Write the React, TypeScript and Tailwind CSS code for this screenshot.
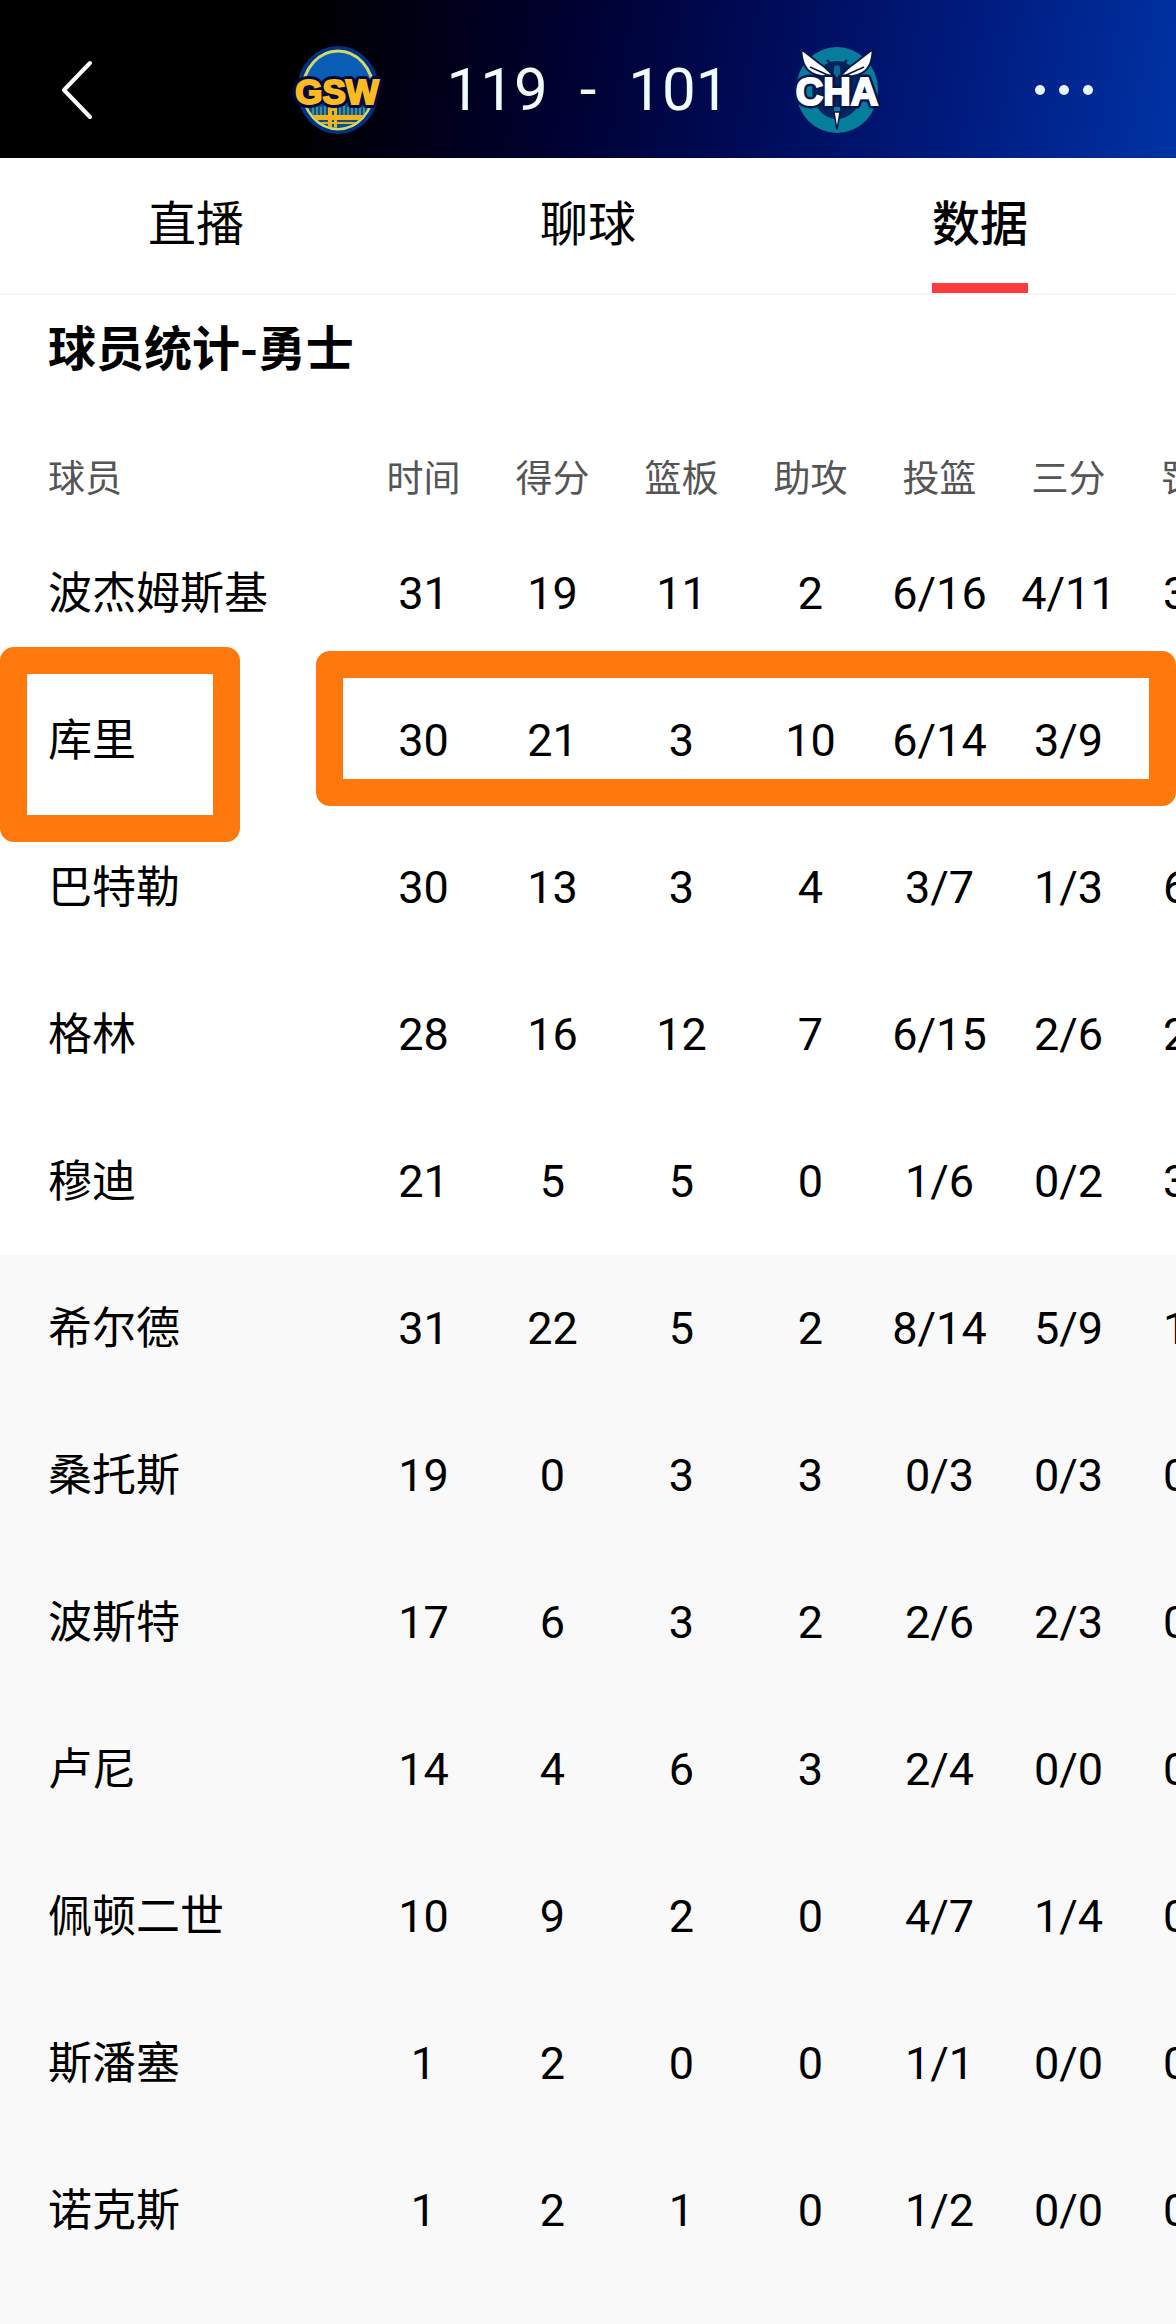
import React from 'react';

type Player = { name: string; stats: string[]; highlighted?: boolean };

const COLUMNS = ['时间', '得分', '篮板', '助攻', '投篮', '三分', '罚球'];

const STARTERS: Player[] = [
  { name: '波杰姆斯基', stats: ['31', '19', '11', '2', '6/16', '4/11', '3/3'] },
  { name: '库里', stats: ['30', '21', '3', '10', '6/14', '3/9', '6/6'], highlighted: true },
  { name: '巴特勒', stats: ['30', '13', '3', '4', '3/7', '1/3', '6/6'] },
  { name: '格林', stats: ['28', '16', '12', '7', '6/15', '2/6', '2/2'] },
  { name: '穆迪', stats: ['21', '5', '5', '0', '1/6', '0/2', '3/4'] },
];

const BENCH: Player[] = [
  { name: '希尔德', stats: ['31', '22', '5', '2', '8/14', '5/9', '1/1'] },
  { name: '桑托斯', stats: ['19', '0', '3', '3', '0/3', '0/3', '0/0'] },
  { name: '波斯特', stats: ['17', '6', '3', '2', '2/6', '2/3', '0/0'] },
  { name: '卢尼', stats: ['14', '4', '6', '3', '2/4', '0/0', '0/0'] },
  { name: '佩顿二世', stats: ['10', '9', '2', '0', '4/7', '1/4', '0/0'] },
  { name: '斯潘塞', stats: ['1', '2', '0', '0', '1/1', '0/0', '0/0'] },
  { name: '诺克斯', stats: ['1', '2', '1', '0', '1/2', '0/0', '0/0'] },
];

const TABS = ['直播', '聊球', '数据'];

function WarriorsLogo() {
  return (
    <svg width="88" height="90" viewBox="0 0 88 90" role="img" aria-label="GSW" className="shrink-0 overflow-visible">
      <defs>
        <clipPath id="gsw-disc">
          <ellipse cx="43" cy="45" rx="34" ry="38" />
        </clipPath>
      </defs>
      <ellipse cx="43" cy="45" rx="41" ry="44" fill="#003183" />
      <ellipse cx="43" cy="45" rx="35" ry="39" fill="#0a5cb4" stroke="#cfd96a" strokeWidth="3" />
      <g clipPath="url(#gsw-disc)">
        <path d="M6 50 H82 V84 H6 Z" fill="#0a4f90" />
        <path
          d="M18 60v14M22 61v14M26 62v12M30 60v14M45 58v14M49 60v12M53 62v12M57 63v10M61 63v10M65 62v12M69 60v12"
          stroke="#57a58e"
          strokeWidth="1.5"
        />
        <path d="M6 70 H82 V75 H6 Z" fill="#f5b21c" />
        <path d="M16 77 H72 V79 H16 Z" fill="#e0b02e" />
        <path d="M33 54h4v32h-4zM39 54h3v32h-3z" fill="#f5b21c" />
        <path d="M33 63h9v3h-9z" fill="#f5b21c" />
      </g>
      <text
        x="42"
        y="59"
        textAnchor="middle"
        fontFamily="'Liberation Sans', Arial, sans-serif"
        fontWeight="700"
        fontSize="35"
        fill="#fdbb21"
        stroke="#020a3c"
        strokeWidth="8"
        strokeLinejoin="round"
        paintOrder="stroke"
      >
        GSW
      </text>
      <text
        x="42"
        y="59"
        textAnchor="middle"
        fontFamily="'Liberation Sans', Arial, sans-serif"
        fontWeight="700"
        fontSize="35"
        fill="#fdbb21"
        stroke="#fdbb21"
        strokeWidth="2"
        aria-hidden="true"
      >
        GSW
      </text>
    </svg>
  );
}

function HornetsLogo() {
  return (
    <svg width="88" height="90" viewBox="0 0 88 90" role="img" aria-label="CHA" className="shrink-0 overflow-visible">
      <ellipse cx="44" cy="45" rx="41" ry="43" fill="#067d9b" />
      <ellipse cx="44" cy="45" rx="25" ry="29" fill="#03245c" />
      <path d="M34 15l6 6h8l6-6M33 22l6 3h10l6-3" fill="none" stroke="#03245c" strokeWidth="2.5" />
      <path
        d="M8 4 L26 18 Q35 24 41 32 L28 31 Q16 29 12 21 Q9 16 8 4 Z M80 4 L62 18 Q53 24 47 32 L60 31 Q72 29 76 21 Q79 16 80 4 Z"
        fill="#ffffff"
        stroke="#03164f"
        strokeWidth="2"
      />
      <path d="M17 22 L37 31 M71 22 L51 31" stroke="#03164f" strokeWidth="1.5" />
      <path d="M41 20h6l1 8-4 6-4-6z" fill="#056a94" stroke="#03164f" strokeWidth="1" />
      <text
        x="44"
        y="60"
        textAnchor="middle"
        fontFamily="'Liberation Sans', Arial, sans-serif"
        fontWeight="700"
        fontSize="38"
        fill="#ffffff"
        stroke="#03164f"
        strokeWidth="7"
        strokeLinejoin="round"
        paintOrder="stroke"
      >
        CHA
      </text>
      <text
        x="44"
        y="60"
        textAnchor="middle"
        fontFamily="'Liberation Sans', Arial, sans-serif"
        fontWeight="700"
        fontSize="38"
        fill="#ffffff"
        stroke="#ffffff"
        strokeWidth="2"
        aria-hidden="true"
      >
        CHA
      </text>
      <path d="M41 62h6v4h-6z" fill="#067d9b" />
      <path d="M41 67h6l-3 18z" fill="#ffffff" stroke="#03164f" strokeWidth="1.5" />
    </svg>
  );
}

function PlayerRow({ player }: { player: Player }) {
  return (
    <tr className="h-[147px]">
      <th scope="row" className="relative p-0 pb-2 pl-12 text-left text-[44px] leading-[60px] font-normal">
        {player.name}
        {player.highlighted && (
          <>
            <span className="pointer-events-none absolute -top-5 -bottom-7 left-0 z-10 w-60 rounded-[14px] border-[27px] border-[#ff780b]" />
            <span className="pointer-events-none absolute -top-4 bottom-2 left-[316px] z-10 w-[calc(100vw-316px)] rounded-[14px] border-[27px] border-[#ff780b]" />
          </>
        )}
      </th>
      {player.stats.map((value, i) => (
        <td key={i} className="p-0 text-center font-[Roboto,sans-serif] text-[45px] leading-[60px]">
          {value}
        </td>
      ))}
    </tr>
  );
}

export default function App() {
  return (
    <div
      lang="zh-CN"
      className="min-h-screen overflow-x-hidden bg-[#f9f9f9] font-['Noto_Sans_CJK_SC',sans-serif] text-black"
    >
      <header className="relative flex h-[158px] items-center justify-center bg-[linear-gradient(100deg,#000_0%,#000_26%,#00002c_46%,#000a55_63%,#001c80_82%,#0033a4_100%)] pt-[22px] text-white">
        <button type="button" aria-label="返回" className="absolute left-12 flex h-16 w-16 items-center">
          <svg width="56" height="60" viewBox="0 0 56 60" fill="none">
            <path d="M42 3 L16 30 L42 57" stroke="#fff" strokeWidth="4" strokeLinecap="round" strokeLinejoin="round" />
          </svg>
        </button>
        <div className="flex items-center gap-16">
          <WarriorsLogo />
          <div className="flex items-center gap-8 font-[Roboto,sans-serif] text-[60px] leading-[60px] text-[#f0fbff]">
            <span>119</span>
            <span>-</span>
            <span>101</span>
          </div>
          <HornetsLogo />
        </div>
        <button type="button" aria-label="更多" className="absolute right-[83px] flex gap-[14px]">
          <span className="size-[10px] rounded-full bg-[#e8f8ff]" />
          <span className="size-[10px] rounded-full bg-[#e8f8ff]" />
          <span className="size-[10px] rounded-full bg-[#e8f8ff]" />
        </button>
      </header>

      <nav className="grid h-[137px] grid-cols-3 border-b-2 border-[#f6f6f6] bg-white">
        {TABS.map((tab) => {
          const active = tab === '数据';
          return (
            <button
              key={tab}
              type="button"
              aria-current={active ? 'page' : undefined}
              className="flex flex-col items-center justify-between pt-[30px] text-5xl leading-[64px]"
            >
              <span className={active ? 'font-medium' : ''}>{tab}</span>
              {active && <span className="h-[10px] w-24 bg-[#fb3b3d]" />}
            </button>
          );
        })}
      </nav>

      <main>
        <h1 className="bg-white px-12 pt-[18px] pb-[55px] text-5xl leading-[64px] font-bold">球员统计-勇士</h1>
        <div className="overflow-x-auto [scrollbar-width:none]">
          <table className="w-[1262px] table-fixed border-collapse">
            <thead className="bg-white">
              <tr className="h-[88px] text-[37px] leading-[48px] text-[#555]">
                <th scope="col" className="w-[359px] p-0 pl-12 text-left font-normal">
                  球员
                </th>
                {COLUMNS.map((c) => (
                  <th key={c} scope="col" className="w-[129px] p-0 text-center font-normal">
                    {c}
                  </th>
                ))}
              </tr>
            </thead>
            <tbody className="bg-white">
              {STARTERS.map((p) => (
                <PlayerRow key={p.name} player={p} />
              ))}
            </tbody>
            <tbody>
              {BENCH.map((p) => (
                <PlayerRow key={p.name} player={p} />
              ))}
            </tbody>
          </table>
        </div>
      </main>
    </div>
  );
}
